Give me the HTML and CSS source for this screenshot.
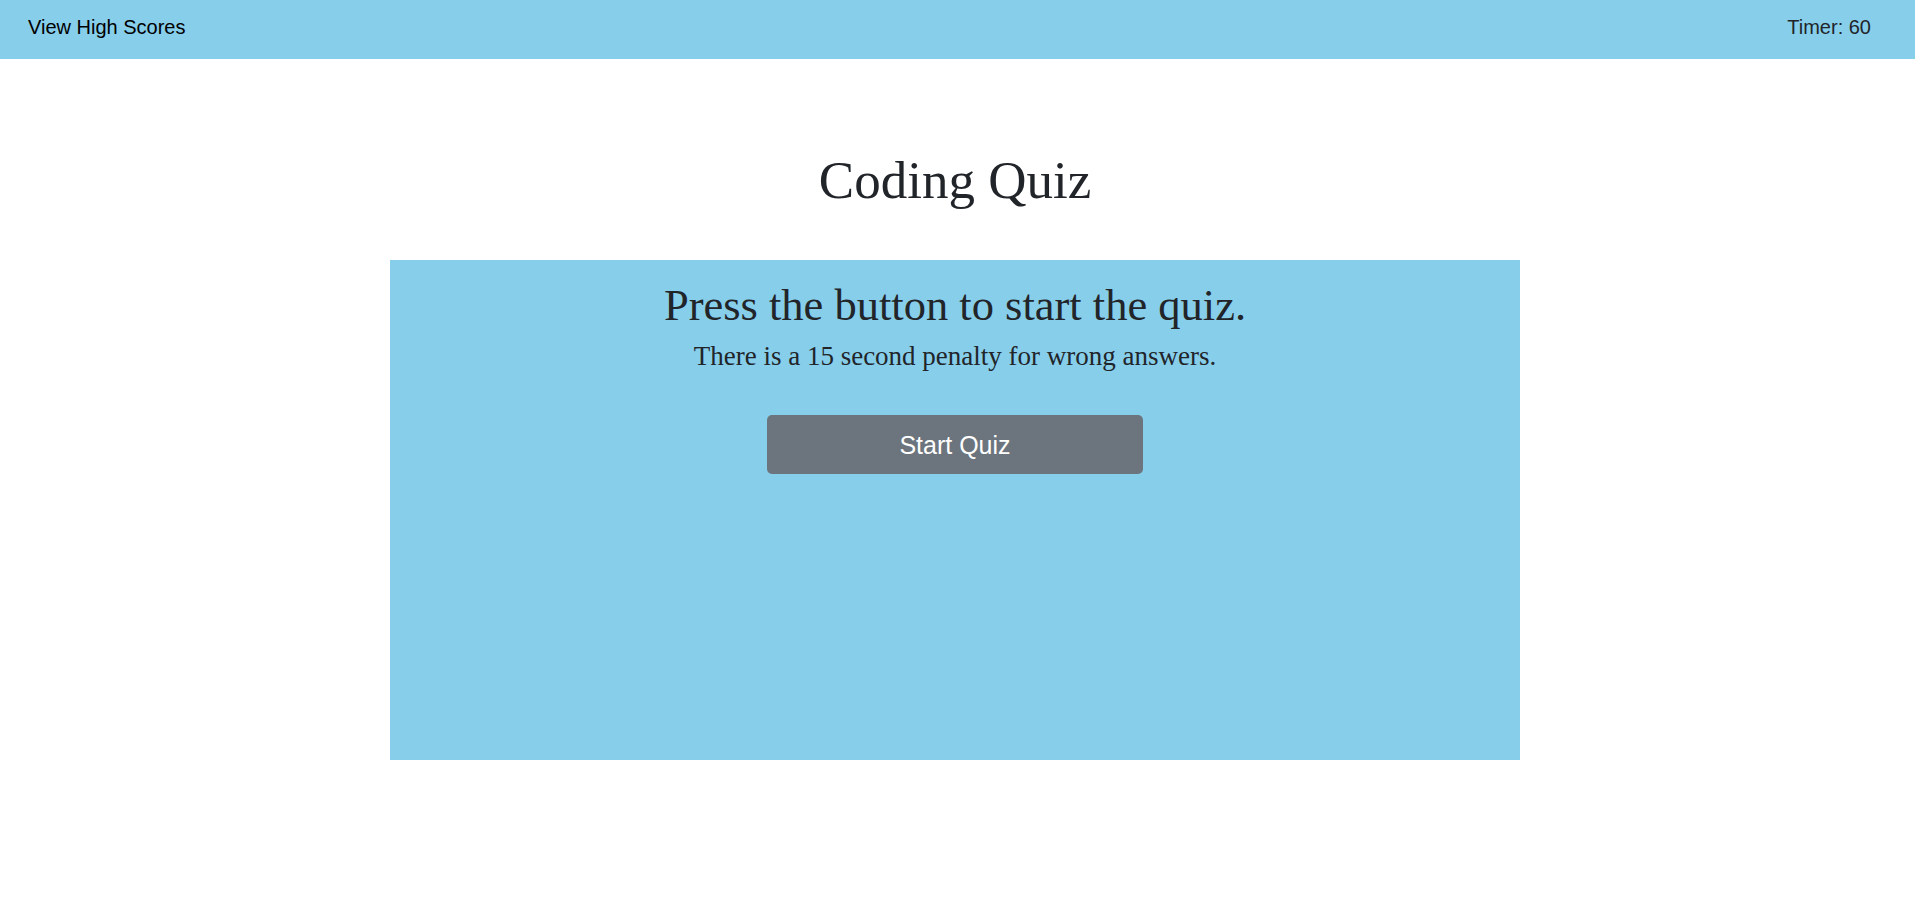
FILE: index.html
```html
<!DOCTYPE html>
<html lang="en">
<head>
<meta charset="utf-8">
<title>Coding Quiz</title>
<link rel="stylesheet" href="styles.css">
</head>
<body>
<header class="topbar">
  <a class="scores-link" href="#">View High Scores</a>
  <span class="timer">Timer: 60</span>
</header>
<main class="page">
  <h1 class="title">Coding Quiz</h1>
  <section class="quiz-box">
    <h2 class="quiz-heading">Press the button to start the quiz.</h2>
    <p class="quiz-lead">There is a 15 second penalty for wrong answers.</p>
    <button class="start-btn" type="button">Start Quiz</button>
  </section>
</main>
</body>
</html>
```

FILE: styles.css
```css
* { box-sizing: border-box; }
html, body { margin: 0; padding: 0; background: #fff; }
body {
  font-family: "Liberation Serif", "Times New Roman", serif;
  color: #212529;
}
.topbar {
  height: 59px;
  background: #87ceeb;
  display: flex;
  justify-content: space-between;
  align-items: flex-start;
  padding: 12px 44px 0 28px;
  font-family: "Liberation Sans", Arial, sans-serif;
  font-size: 20px;
  line-height: 30px;
}
.scores-link { color: #000; text-decoration: none; }
.timer { color: #212529; }
.page {
  padding-right: 5px;
  display: flex;
  flex-direction: column;
  align-items: center;
}
.title {
  margin: 91px 0 0;
  font-weight: 400;
  font-size: 53px;
  line-height: 60px;
  height: 60px;
}
.quiz-box {
  margin-top: 50px;
  width: 1130px;
  height: 500px;
  background: #87ceeb;
  display: flex;
  flex-direction: column;
  align-items: center;
  padding-top: 21px;
}
.quiz-heading {
  margin: 0;
  font-weight: 400;
  font-size: 44.5px;
  line-height: 48px;
}
.quiz-lead {
  margin: 12px 0 0;
  font-size: 27px;
  line-height: 30px;
}
.start-btn {
  margin-top: 44px;
  width: 376px;
  height: 59px;
  border: 0;
  border-radius: 5px;
  background: #6c757d;
  color: #fff;
  font-family: "Liberation Sans", Arial, sans-serif;
  font-size: 25px;
  line-height: 30px;
  padding: 0;
}
```
